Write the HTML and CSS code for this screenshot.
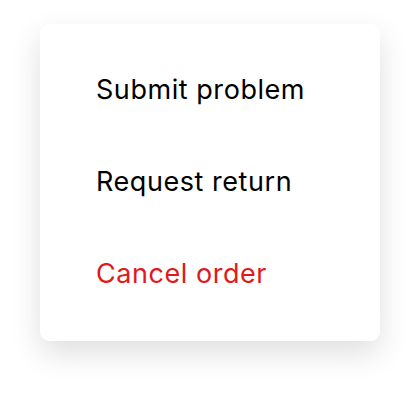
FILE: index.html
```html
<!DOCTYPE html>
<html>
<head>
<meta charset="utf-8">
<link rel="stylesheet" href="styles.css">
</head>
<body>
<div class="menu">
  <div class="item">Submit problem</div>
  <div class="item">Request return</div>
  <div class="item danger">Cancel order</div>
</div>
</body>
</html>
```
FILE: styles.css
```css
html, body {
  margin: 0;
  background: #ffffff;
}
html {
  min-height: 398px;
}
body {
  padding: 24px 40px;
  min-height: 398px;
  box-sizing: border-box;
  font-family: Inter, "Noto Sans", sans-serif;
}
.menu {
  width: 340px;
  box-sizing: border-box;
  background: #fff;
  border-radius: 9px;
  padding: 20px 0 21px;
  box-shadow: 0 12px 30px rgba(0, 0, 0, 0.13);
}
.item {
  height: 92px;
  line-height: 92px;
  padding-left: 56px;
  font-size: 27px;
  letter-spacing: 0.55px;
  color: #000;
}
.danger {
  color: #e0191b;
}
```
